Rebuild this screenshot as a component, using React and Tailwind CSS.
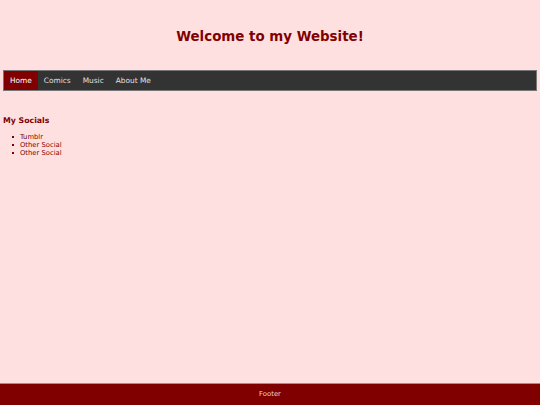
export default function App() {
  const links = ["Home", "Comics", "Music", "About Me"];

  return (
    <div className="min-h-screen flex flex-col bg-[#ffe0e0] font-['DejaVu_Sans',sans-serif] text-[#800000]">
      <header className="h-[70px] flex items-center justify-center pt-[4px]">
        <h1 className="text-[13.4px] font-bold">Welcome to my Website!</h1>
      </header>

      <nav className="mx-[3px] h-[21px] flex bg-[#333333] border border-[#777777]">
        {links.map((link, i) => (
          <a
            key={link}
            href="#"
            className={
              "flex items-center px-[6px] text-[7.4px] " +
              (i === 0 ? "bg-[#800000] text-white" : "text-[#e0e0e0]")
            }
          >
            {link}
          </a>
        ))}
      </nav>

      <main className="flex-1 px-[3px] pt-[24px]">
        <h2 className="text-[7.8px] font-bold">My Socials</h2>
        <ul className="mt-[6px] pl-[17px] text-[6.8px] leading-[8px]">
          {["Tumblr", "Other Social", "Other Social"].map((item, i) => (
            <li key={i} className="flex items-center">
              <span className="-ml-[8px] mr-[6px] w-[2px] h-[2px] bg-[#800000]" />
              {item}
            </li>
          ))}
        </ul>
      </main>

      <footer className="h-[22px] flex items-center justify-center bg-[#800000] border-t border-[#c08080] text-[6.9px] text-[#f0d0d0]">
        Footer
      </footer>
    </div>
  );
}
